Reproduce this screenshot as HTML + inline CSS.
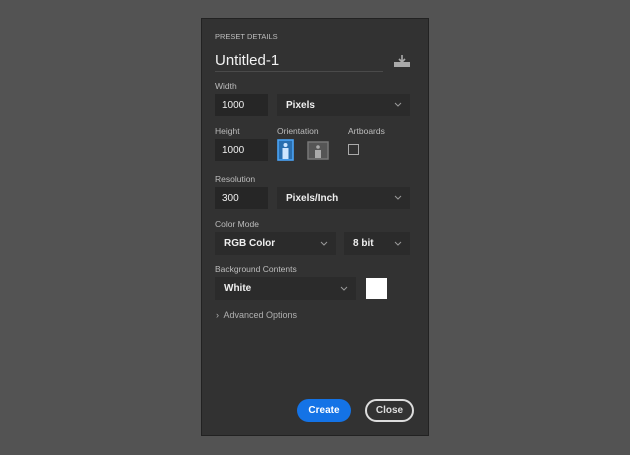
<!DOCTYPE html><html><head><style>
body{margin:0;width:630px;height:455px;background:#535353;font-family:"Liberation Sans",sans-serif;position:relative;overflow:hidden}
.p{position:absolute;left:201px;top:18px;width:226px;height:416px;background:#323232;border:1px solid #222}
.a{position:absolute}
.l{position:absolute;color:#bdbdbd;font-size:8.5px}
.i{position:absolute;background:#262626;color:#f0f0f0;font-size:10px;box-sizing:border-box;padding-left:7px;display:flex;align-items:center}
.d{position:absolute;background:#2b2b2b;color:#f0f0f0;font-size:10px;font-weight:bold;box-sizing:border-box;padding-left:9px;display:flex;align-items:center}
.d svg{position:absolute;right:8px;top:50%;margin-top:-3px}
.b{position:absolute;display:flex;align-items:center;justify-content:center;font-size:10px;font-weight:bold;box-sizing:border-box;border-radius:12px}
</style></head><body>
<div class="p"></div>
<div class="l" style="left:215px;top:32px;font-size:7.5px">PRESET DETAILS</div>
<div class="a" style="left:215px;top:52px;color:#f2f2f2;font-size:15px">Untitled-1</div>
<div class="a" style="left:215px;top:71px;width:168px;height:1px;background:#4a4a4a"></div>
<svg class="a" style="left:393px;top:54px" width="18" height="14"><path d="M9 1v7M6 5l3 3 3-3" stroke="#aaa" stroke-width="1.6" fill="none"/><rect x="1" y="8" width="16" height="5" fill="#aaa"/></svg>
<div class="l" style="left:215px;top:81px">Width</div>
<div class="i" style="left:215px;top:94px;width:53px;height:22px">1000</div>
<div class="d" style="left:277px;top:94px;width:133px;height:22px">Pixels<svg width="8" height="6"><path d="M1 1l3 3 3-3" stroke="#999" fill="none"/></svg></div>
<div class="l" style="left:215px;top:126px">Height</div>
<div class="l" style="left:277px;top:126px">Orientation</div>
<div class="l" style="left:348px;top:126px">Artboards</div>
<div class="i" style="left:215px;top:139px;width:53px;height:22px">1000</div>
<svg class="a" style="left:277px;top:139px" width="17" height="22"><rect x="1" y="1" width="15" height="20" fill="#2a6fb0" stroke="#4aa3f5" stroke-width="1.6"/><circle cx="8.5" cy="6" r="2" fill="#cfe6ff"/><rect x="5.5" y="9" width="6" height="11" fill="#cfe6ff"/></svg>
<svg class="a" style="left:307px;top:141px" width="22" height="19"><rect x="1" y="1" width="20" height="17" fill="#555" stroke="#777" stroke-width="1.5"/><circle cx="11" cy="6" r="1.8" fill="#aaa"/><rect x="8" y="9" width="6" height="8" fill="#aaa"/></svg>
<div class="a" style="left:348px;top:144px;width:9px;height:9px;border:1px solid #aaa"></div>
<div class="l" style="left:215px;top:174px">Resolution</div>
<div class="i" style="left:215px;top:187px;width:53px;height:22px">300</div>
<div class="d" style="left:277px;top:187px;width:133px;height:22px">Pixels/Inch<svg width="8" height="6"><path d="M1 1l3 3 3-3" stroke="#999" fill="none"/></svg></div>
<div class="l" style="left:215px;top:219px">Color Mode</div>
<div class="d" style="left:215px;top:232px;width:121px;height:23px">RGB Color<svg width="8" height="6"><path d="M1 1l3 3 3-3" stroke="#999" fill="none"/></svg></div>
<div class="d" style="left:344px;top:232px;width:66px;height:23px">8 bit<svg width="8" height="6"><path d="M1 1l3 3 3-3" stroke="#999" fill="none"/></svg></div>
<div class="l" style="left:215px;top:264px">Background Contents</div>
<div class="d" style="left:215px;top:277px;width:141px;height:23px">White<svg width="8" height="6"><path d="M1 1l3 3 3-3" stroke="#999" fill="none"/></svg></div>
<div class="a" style="left:366px;top:278px;width:21px;height:21px;background:#fff"></div>
<div class="a" style="left:216px;top:310px;color:#b0b0b0;font-size:9px">›&nbsp; Advanced Options</div>
<div class="b" style="left:297px;top:399px;width:54px;height:23px;background:#1473e6;color:#fff">Create</div>
<div class="b" style="left:365px;top:399px;width:49px;height:23px;border:2px solid #ddd;color:#ddd">Close</div>
</body></html>
